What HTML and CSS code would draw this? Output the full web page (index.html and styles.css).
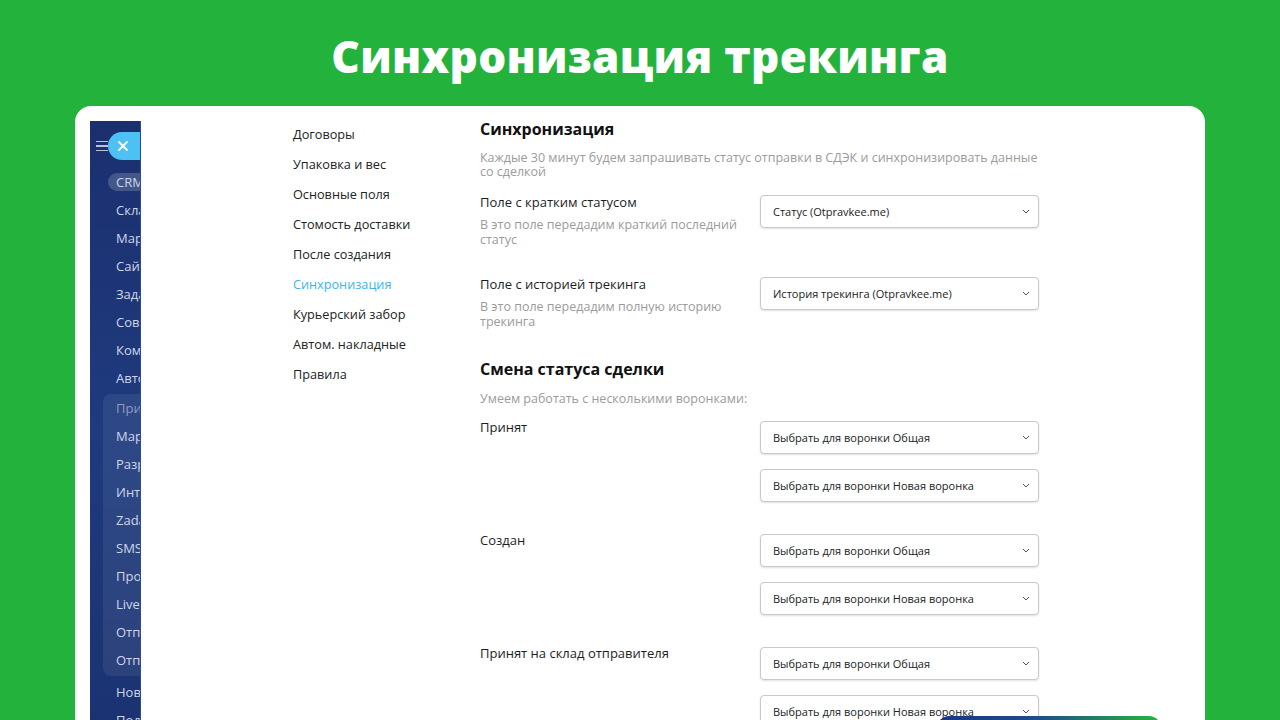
FILE: index.html
```html
<!DOCTYPE html>
<html lang="ru">
<head>
    <meta charset="UTF-8">
    <meta name="viewport" content="width=device-width, initial-scale=1.0">
    <title>Синхронизация трекинга</title>
    <link rel="stylesheet" href="styles.css">
</head>
<body>
    <h1 class="page-title">Синхронизация трекинга</h1>

    <div class="card">
        <!-- обрезанное боковое меню CRM -->
        <div class="crm-sidebar">
            <div class="crm-top">
                <span class="burger"><i></i><i></i><i></i></span>
                <span class="close-pill">
                    <svg width="12" height="12" viewBox="0 0 12 12"><path d="M2 2L10 10M10 2L2 10" stroke="#fff" stroke-width="1.8" stroke-linecap="round"/></svg>
                    <span class="close-text">Меню</span>
                </span>
            </div>
            <div class="crm-item crm-pill">CRM</div>
            <div class="crm-item">Склад</div>
            <div class="crm-item">Маркетинг</div>
            <div class="crm-item">Сайты</div>
            <div class="crm-item">Задачи</div>
            <div class="crm-item">Совместная работа</div>
            <div class="crm-item">Компания</div>
            <div class="crm-item">Автоматизация</div>
            <div class="crm-group">
                <div class="crm-item dim">Приложения</div>
                <div class="crm-item">Маркет</div>
                <div class="crm-item">Разработчикам</div>
                <div class="crm-item">Интеграции</div>
                <div class="crm-item">Zadarma</div>
                <div class="crm-item">SMS.ru</div>
                <div class="crm-item">Проверка</div>
                <div class="crm-item">LiveLead</div>
                <div class="crm-item">Отправки</div>
                <div class="crm-item">Отправкии</div>
            </div>
            <div class="crm-item">Новости</div>
            <div class="crm-item">Поддержка</div>
        </div>

        <!-- меню настроек -->
        <ul class="settings-nav">
            <li>Договоры</li>
            <li>Упаковка и вес</li>
            <li>Основные поля</li>
            <li>Стомость доставки</li>
            <li>После создания</li>
            <li class="active">Синхронизация</li>
            <li>Курьерский забор</li>
            <li>Автом. накладные</li>
            <li>Правила</li>
        </ul>

        <div class="settings-main">
            <h2 class="section-title">Синхронизация</h2>
            <p class="hint">Каждые 30 минут будем запрашивать статус отправки в СДЭК и синхронизировать данные со сделкой</p>

            <div class="field-row">
                <div class="field-text">
                    <div class="field-label">Поле с кратким статусом</div>
                    <p class="field-hint">В это поле передадим краткий последний статус</p>
                </div>
                <div class="selects">
                    <div class="select">Статус (Otpravkee.me)<svg class="chevron" width="8" height="5" viewBox="0 0 8 5"><path d="M1 1L4 4L7 1" fill="none" stroke="#555" stroke-width="1"/></svg></div>
                </div>
            </div>

            <div class="field-row">
                <div class="field-text">
                    <div class="field-label">Поле с историей трекинга</div>
                    <p class="field-hint">В это поле передадим полную историю трекинга</p>
                </div>
                <div class="selects">
                    <div class="select">История трекинга (Otpravkee.me)<svg class="chevron" width="8" height="5" viewBox="0 0 8 5"><path d="M1 1L4 4L7 1" fill="none" stroke="#555" stroke-width="1"/></svg></div>
                </div>
            </div>

            <h2 class="section-title second">Смена статуса сделки</h2>
            <p class="hint hint-short">Умеем работать с несколькими воронками:</p>

            <div class="status-row">
                <div class="field-label">Принят</div>
                <div class="selects status-selects">
                    <div class="select">Выбрать для воронки Общая<svg class="chevron" width="8" height="5" viewBox="0 0 8 5"><path d="M1 1L4 4L7 1" fill="none" stroke="#555" stroke-width="1"/></svg></div>
                    <div class="select">Выбрать для воронки Новая воронка<svg class="chevron" width="8" height="5" viewBox="0 0 8 5"><path d="M1 1L4 4L7 1" fill="none" stroke="#555" stroke-width="1"/></svg></div>
                </div>
            </div>

            <div class="status-row">
                <div class="field-label">Создан</div>
                <div class="selects status-selects">
                    <div class="select">Выбрать для воронки Общая<svg class="chevron" width="8" height="5" viewBox="0 0 8 5"><path d="M1 1L4 4L7 1" fill="none" stroke="#555" stroke-width="1"/></svg></div>
                    <div class="select">Выбрать для воронки Новая воронка<svg class="chevron" width="8" height="5" viewBox="0 0 8 5"><path d="M1 1L4 4L7 1" fill="none" stroke="#555" stroke-width="1"/></svg></div>
                </div>
            </div>

            <div class="status-row">
                <div class="field-label">Принят на склад отправителя</div>
                <div class="selects status-selects">
                    <div class="select">Выбрать для воронки Общая<svg class="chevron" width="8" height="5" viewBox="0 0 8 5"><path d="M1 1L4 4L7 1" fill="none" stroke="#555" stroke-width="1"/></svg></div>
                    <div class="select">Выбрать для воронки Новая воронка<svg class="chevron" width="8" height="5" viewBox="0 0 8 5"><path d="M1 1L4 4L7 1" fill="none" stroke="#555" stroke-width="1"/></svg></div>
                </div>
            </div>
        </div>

        <!-- плашка внизу, перекрывает контент -->
        <div class="bottom-pill"></div>
    </div>
</body>
</html>
```

FILE: styles.css
```css
* {
    margin: 0;
    padding: 0;
    box-sizing: border-box;
}

html, body {
    height: 720px;
    overflow: hidden;
}

body {
    font-family: 'Open Sans', 'Noto Sans', sans-serif;
    background: #23b33d;
    color: #222;
}

.page-title {
    height: 106px;
    padding-top: 26px;
    text-align: center;
    color: #fff;
    font-family: 'Open Sans', 'Noto Sans', sans-serif;
    font-size: 44px;
    font-weight: 800;
    line-height: 60px;
    letter-spacing: 0.3px;
}

.card {
    position: relative;
    display: flex;
    align-items: flex-start;
    margin: 0 75px;
    height: 640px;
    padding: 15px 0 0 15px;
    background: #fff;
    border-radius: 16px 16px 0 0;
}

/* боковое меню */
.crm-sidebar {
    flex: 0 0 51px;
    height: 620px;
    overflow: hidden;
    white-space: nowrap;
    background: linear-gradient(180deg, #1b2f6e 0%, #1f3b7e 50%, #1a3270 100%);
    border-right: 1px solid #2b4a9a;
    color: #cfd6ea;
    font-size: 13px;
}

.crm-top {
    display: flex;
    align-items: center;
    height: 28px;
    margin-top: 11px;
    padding-left: 6px;
}

.burger {
    display: flex;
    flex-direction: column;
    flex-shrink: 0;
    gap: 3px;
    width: 12px;
}

.burger i {
    display: block;
    height: 1.5px;
    background: #b9c2dc;
}

.close-pill {
    display: flex;
    align-items: center;
    flex-shrink: 0;
    gap: 10px;
    height: 28px;
    padding-left: 9px;
    width: 90px;
    border-radius: 14px;
    background: #4dc1f3;
}

.close-text {
    color: rgba(255, 255, 255, 0.35);
}

.crm-item {
    height: 28px;
    line-height: 28px;
    padding-left: 26px;
}

.crm-pill {
    margin-top: 13px;
    margin-left: 18px;
    padding-left: 8px;
    height: 18px;
    line-height: 18px;
    margin-bottom: 5px;
    width: 60px;
    border-radius: 9px;
    background: rgba(255, 255, 255, 0.18);
}

.crm-group {
    margin-left: 13px;
    margin-top: 2px;
    margin-bottom: 2px;
    padding-bottom: 2px;
    border-radius: 8px 0 0 8px;
    background: rgba(255, 255, 255, 0.07);
}

.crm-group .crm-item {
    padding-left: 13px;
}

.crm-item.dim {
    color: #8e9ac0;
}

/* меню настроек */
.settings-nav {
    flex: 0 0 187px;
    margin-left: 152px;
    margin-top: -2px;
    list-style: none;
    font-size: 12.7px;
    color: #222;
}

.settings-nav li {
    height: 30px;
    line-height: 30px;
}

.settings-nav li.active {
    color: #3cb4ee;
}

/* основная часть */
.settings-main {
    flex: 1;
}

.section-title {
    font-size: 16px;
    font-weight: 700;
    line-height: 16px;
    color: #111;
}

.section-title.second {
    margin-top: 31px;
}

.hint {
    margin-top: 14px;
    width: 570px;
    font-size: 12.5px;
    line-height: 14px;
    color: #9b9b9b;
}

.hint-short {
    margin-top: 14px;
    line-height: 15px;
}

.field-row {
    display: flex;
    margin-top: 14px;
    height: 55px;
}

.field-row + .field-row {
    margin-top: 27px;
}

.field-text {
    width: 280px;
}

.field-label {
    font-size: 13px;
    line-height: 18px;
    color: #1e1e1e;
}

.field-hint {
    margin-top: 6px;
    width: 262px;
    font-size: 12.5px;
    line-height: 15px;
    color: #9b9b9b;
}

.selects {
    display: flex;
    flex-direction: column;
    gap: 15px;
    padding-top: 2px;
}

.select {
    display: flex;
    align-items: center;
    justify-content: space-between;
    width: 279px;
    height: 33px;
    padding: 0 8px 0 12px;
    border: 1px solid #c9c9c9;
    border-radius: 4px;
    box-shadow: 0 1px 2px rgba(0, 0, 0, 0.12);
    font-size: 11px;
    color: #222;
    background: #fff;
}

.chevron {
    flex: 0 0 auto;
}

.status-row {
    display: flex;
    margin-top: 12px;
}

.status-row + .status-row {
    margin-top: 29px;
}

.status-row .field-label {
    width: 280px;
}

.status-selects {
    padding-top: 3px;
}

.bottom-pill {
    position: absolute;
    left: 862px;
    top: 610px;
    width: 224px;
    height: 30px;
    border-radius: 12px;
    background: linear-gradient(90deg, #1b3585 0%, #1f4d8a 45%, #27b53a 100%);
}
```
